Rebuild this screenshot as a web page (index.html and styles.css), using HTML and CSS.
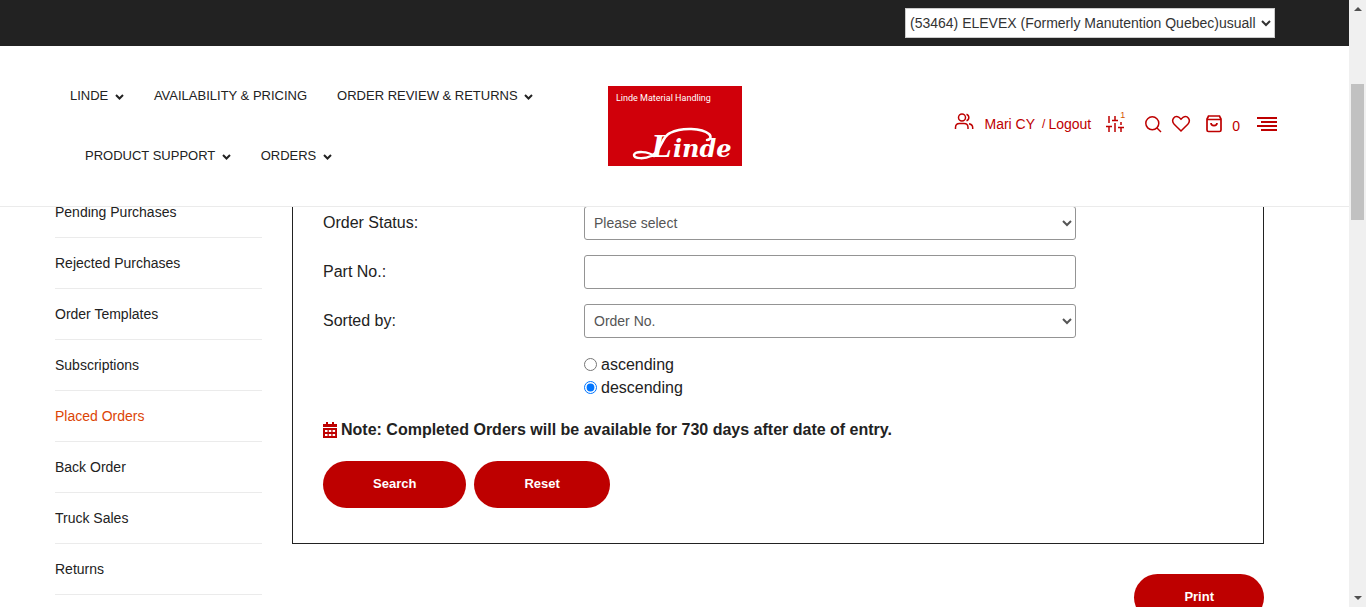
FILE: index.html
```html
<!DOCTYPE html>
<html lang="en">
<head>
<meta charset="utf-8">
<title>Placed Orders</title>
<link rel="stylesheet" href="styles.css">
</head>
<body>
<div class="window">
  <div class="page">
    <div class="topbar">
      <select class="dealer" aria-label="Dealer account">
        <option>(53464) ELEVEX (Formerly Manutention Quebec)usuall</option>
      </select>
    </div>

    <header class="header">
      <nav class="nav" aria-label="Main">
        <a class="nav-item" href="#">LINDE <svg class="chev" viewBox="0 0 9 6"><path d="M1 1l3.500 3.500L8 1"/></svg></a>
        <a class="nav-item" href="#">AVAILABILITY &amp; PRICING</a>
        <a class="nav-item" href="#">ORDER REVIEW &amp; RETURNS <svg class="chev" viewBox="0 0 9 6"><path d="M1 1l3.500 3.500L8 1"/></svg></a>
        <a class="nav-item" href="#">PRODUCT SUPPORT <svg class="chev" viewBox="0 0 9 6"><path d="M1 1l3.500 3.500L8 1"/></svg></a>
        <a class="nav-item" href="#">ORDERS <svg class="chev" viewBox="0 0 9 6"><path d="M1 1l3.500 3.500L8 1"/></svg></a>
      </nav>

      <a class="logo" href="#" aria-label="Linde Material Handling">
        <svg viewBox="0 0 134 80" width="134" height="80">
          <rect width="134" height="80" fill="#d0000a"/>
          <text class="logo-small" x="8" y="15">Linde Material Handling</text>
          <text class="logo-word" x="43" y="71"><tspan class="logo-cap">L</tspan><tspan x="65">inde</tspan></text>
          <path d="M46 70C40 65 27 65 26 69C26 73 37 73 43 70C54 65 53 51 62 47C74 41 94 42 101 48C104 51 102 54 99 54" fill="none" stroke="#fff" stroke-width="2.500" stroke-linecap="round"/>
        </svg>
      </a>

      <div class="tools">
        <svg class="icon people" viewBox="0 0 20 20"><circle cx="8" cy="5.500" r="3.500"/><path d="M1.500 17v-1.500c0-2.500 1.500-4 4-4h4.500c2.500 0 4 1.500 4 4V17M12.500 2.200a3.500 3.500 0 0 1 0 6.600M15 11.700c2.500.5 3.700 1.800 3.700 4V17"/></svg>
        <a class="user" href="#">Mari CY</a>
        <span class="slash">/</span>
        <a class="logout" href="#">Logout</a>
        <button class="tool compare" aria-label="Compare"><svg class="icon" viewBox="0 0 20 20"><path d="M4 2v7M4 12v6M10 2v4M10 9v9M16 8v3M16 14v4M1 12.500h6M7 6.500h6M13 13.500h6"/></svg><span class="sup">1</span></button>
        <button class="tool search" aria-label="Search site"><svg class="icon" viewBox="0 0 20 20"><circle cx="9.300" cy="9.300" r="6.500"/><path d="M14 14l4 4"/></svg></button>
        <button class="tool" aria-label="Wish list"><svg class="icon" viewBox="0 0 20 20"><path d="M10 17L3.200 10.200C-.5 6 3.500.8 8 3.300L10 5.200l2-1.900c4.500-2.500 8.500 2.700 4.800 6.900z"/></svg></button>
        <button class="tool bag" aria-label="Cart"><svg class="icon" viewBox="0 0 20 20"><path d="M4.500 2h11L17 5v11a1.500 1.500 0 0 1-1.500 1.500h-11A1.500 1.500 0 0 1 3 16V5zM3 5.500h14M7 9c0 3.500 6 3.500 6 0"/></svg></button>
        <span class="count">0</span>
        <button class="tool menu" aria-label="Menu"><svg width="20" height="14" viewBox="0 0 20 14"><path d="M0 1h20M4 5h16M0 9h20M4 13h16" stroke="#be0000" stroke-width="2"/></svg></button>
      </div>
    </header>

    <main class="main">
      <ul class="side">
        <li><a href="#">Pending Purchases</a></li>
        <li><a href="#">Rejected Purchases</a></li>
        <li><a href="#">Order Templates</a></li>
        <li><a href="#">Subscriptions</a></li>
        <li><a class="current" href="#">Placed Orders</a></li>
        <li><a href="#">Back Order</a></li>
        <li><a href="#">Truck Sales</a></li>
        <li><a href="#">Returns</a></li>
      </ul>

      <div class="content">
        <form class="panel">
          <div class="row">
            <label for="status">Order Status:</label>
            <select class="field" id="status"><option>Please select</option></select>
          </div>
          <div class="row">
            <label for="part">Part No.:</label>
            <input class="field" id="part" type="text">
          </div>
          <div class="row">
            <label for="sort">Sorted by:</label>
            <select class="field" id="sort"><option>Order No.</option></select>
          </div>
          <div class="row">
            <div class="radios">
              <label class="radio"><input type="radio" name="dir">ascending</label>
              <label class="radio"><input type="radio" name="dir" checked>descending</label>
            </div>
          </div>
          <p class="note"><svg width="14" height="16" viewBox="0 0 14 16"><path d="M3 0h2v2h4V0h2v2h3v3H0V2h3zM0 6h14v10H0z" fill="#be0000"/><path d="M2 8h2.500v2H2zM5.800 8h2.500v2H5.800zM9.600 8h2.500v2H9.600zM2 12h2.500v2H2zM5.800 12h2.500v2H5.800zM9.600 12h2.500v2H9.600z" fill="#fff"/></svg>Note: Completed Orders will be available for 730 days after date of entry.</p>
          <div class="actions">
            <button class="btn" type="button">Search</button>
            <button class="btn" type="button">Reset</button>
          </div>
        </form>
        <button class="btn print" type="button">Print</button>
      </div>
    </main>
  </div>

  <div class="scrollbar" aria-hidden="true">
    <span class="arrow up"></span>
    <span class="thumb"></span>
    <span class="arrow down"></span>
  </div>
</div>
</body>
</html>
```

FILE: styles.css
```css
* { box-sizing: border-box; }
body {
  margin: 0;
  font-family: "Liberation Sans", Arial, sans-serif;
  font-size: 16px;
  color: #222;
  background: #fff;
}
a { color: inherit; text-decoration: none; }
button { font-family: inherit; border: 0; cursor: pointer; }

.window {
  display: grid;
  grid-template-columns: minmax(0, 1fr) 17px;
  height: 100vh;
  overflow: hidden;
}
.page { min-width: 0; overflow: hidden; }

.topbar {
  display: flex;
  justify-content: flex-end;
  padding: 8px 74px;
  background: #222;
}
.dealer {
  width: 370px;
  height: 30px;
  padding: 0;
  border: 1px solid #ccc;
  border-radius: 0;
  background: #fff;
  color: #333;
  font-family: inherit;
  font-size: 14px;
}

.header {
  position: relative;
  z-index: 1;
  display: grid;
  grid-template-columns: minmax(0, 1fr) 134px minmax(0, 1fr);
  align-items: center;
  padding: 20px 70px;
  background: #fff;
  border-bottom: 1px solid #ebebeb;
}
.nav { display: flex; flex-wrap: wrap; }
.nav-item {
  padding: 0 15px;
  line-height: 60px;
  font-size: 13px;
  white-space: nowrap;
}
.nav-item:first-child { padding-left: 0; }
.chev { width: 9px; height: 6px; margin-left: 3px; }
.chev path { fill: none; stroke: #222; stroke-width: 2; }

.logo svg { display: block; }
.logo-small { fill: #fff; font-family: Roboto, sans-serif; font-size: 9px; }
.logo-word { fill: #fff; font-family: "DejaVu Serif", serif; font-size: 24px; font-weight: bold; font-style: italic; }
.logo-cap { font-family: "Liberation Serif", serif; font-size: 34px; }

.tools {
  display: flex;
  justify-content: flex-end;
  align-items: center;
  padding-bottom: 4px;
  color: #be0000;
  font-size: 14px;
}
.icon {
  display: block;
  width: 20px;
  height: 20px;
  fill: none;
  stroke: #be0000;
  stroke-width: 1.5;
}
.people { margin-bottom: 4px; }
.bag .icon { stroke-width: 1.7; }
.user { margin-left: 10px; }
.slash { margin-left: 7px; font-size: 12px; }
.logout { margin-left: 3px; }
.tool { padding: 0; background: none; }
.compare { position: relative; margin-left: 14px; }
.sup { position: absolute; top: -4px; right: 0; font-size: 9px; line-height: 10px; color: #d45500; }
.search { margin: 0 8px 0 18px; }
.bag { margin-left: 13px; }
.count { margin-left: 8px; padding-top: 4px; }
.menu { margin-left: 15px; padding: 0 2px; }
.menu svg { display: block; }

.main {
  display: grid;
  grid-template-columns: 207px minmax(0, 1fr);
  gap: 30px;
  margin-top: -20px;
  padding: 0 85px 40px 55px;
}
.side { margin: 0; padding: 0; list-style: none; font-size: 14px; }
.side li { border-bottom: 1px solid #ebebeb; line-height: 50px; }
.current { color: #dc4405; }

.content { display: flex; flex-direction: column; }
.panel {
  display: flex;
  flex-direction: column;
  gap: 15px;
  padding: 18px 30px 35px;
  border: 1px solid #222;
}
.row {
  display: grid;
  grid-template-columns: 261px minmax(0, 492px);
  align-items: center;
}
.field {
  width: 100%;
  height: 34px;
  padding: 0 5px;
  border: 1px solid #949494;
  border-radius: 3px;
  background: #fff;
  color: #555;
  font-family: inherit;
  font-size: 14px;
}
select.field { padding-right: 4px; }
.radios { grid-column: 2; }
.radio { display: flex; align-items: center; gap: 4px; line-height: 23px; }
.radio input { width: 13px; height: 13px; margin: 0; }
.note {
  display: flex;
  align-items: center;
  gap: 4px;
  margin: 6px 0;
  line-height: 20px;
  font-weight: bold;
}
.actions { display: flex; gap: 8px; }
.btn {
  height: 47px;
  padding: 0 50px 2px;
  border-radius: 24px;
  background: #be0000;
  color: #fff;
  font-size: 13px;
  font-weight: bold;
}
.print { align-self: flex-end; margin-top: 30px; }

.scrollbar {
  display: flex;
  flex-direction: column;
  align-items: center;
  padding: 7px 0;
  background: #f0f0f0;
}
.arrow { border: 4px solid transparent; }
.up { border-top: 0; border-bottom-color: #505050; }
.down { margin-top: auto; border-bottom: 0; border-top-color: #505050; }
.thumb { width: 13px; height: 136px; margin-top: 73px; background: #c1c1c1; }
```
